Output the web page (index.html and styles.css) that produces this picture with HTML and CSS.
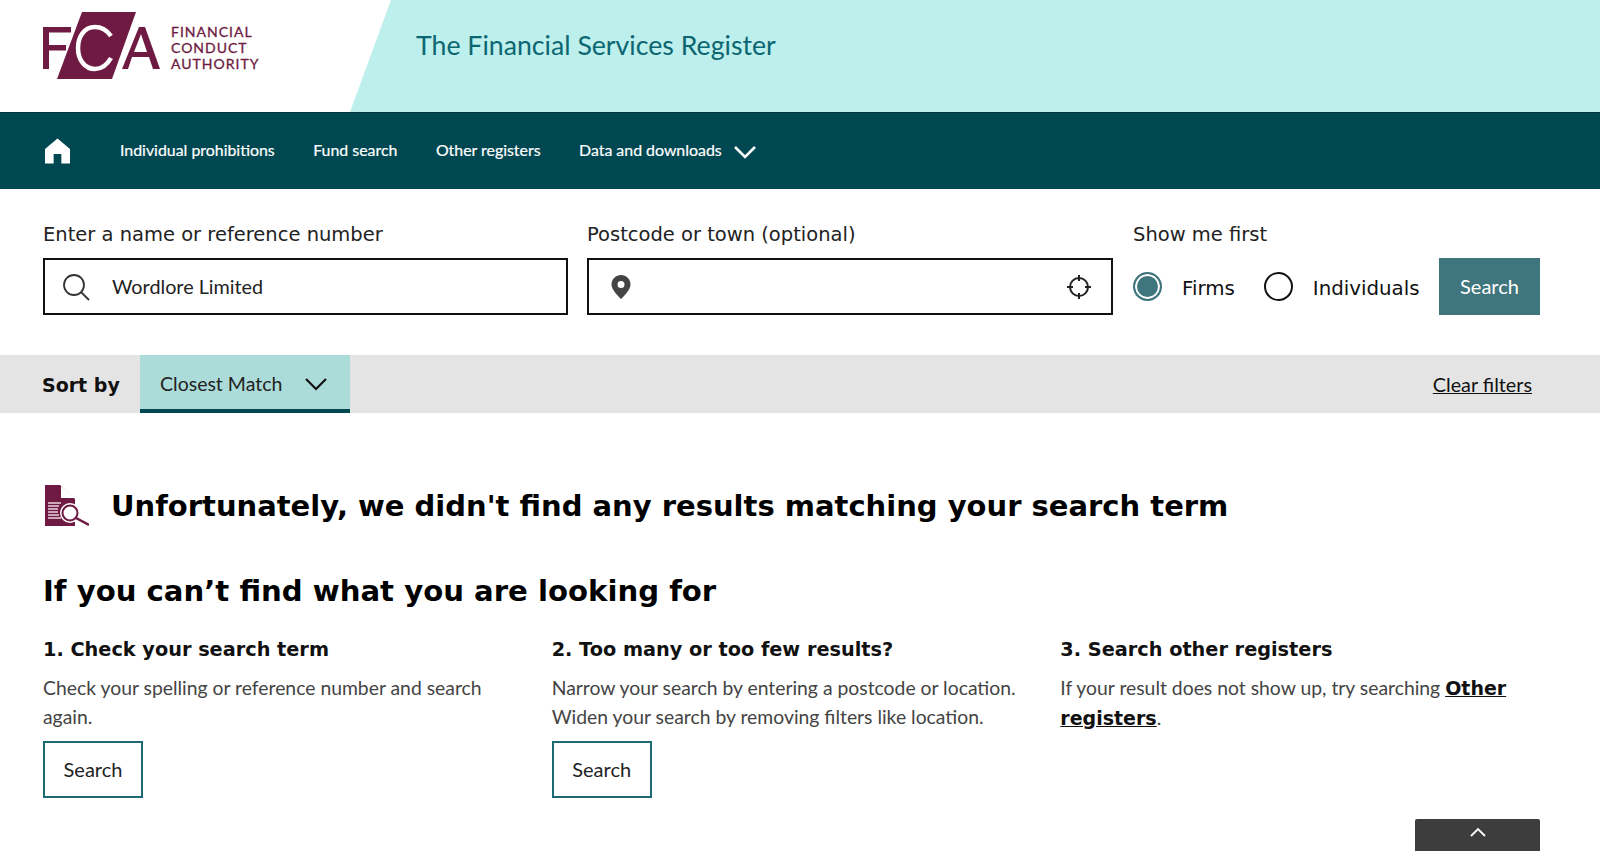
FILE: index.html
```html
<!DOCTYPE html>
<html lang="en">
<head>
    <meta charset="UTF-8">
    <meta name="viewport" content="width=device-width, initial-scale=1.0">
    <title>The Financial Services Register</title>
    <link rel="stylesheet" href="styles.css">
</head>
<body>

<header class="site-header">
    <div class="logo-box">
        <svg class="logo-mark" width="122" height="68" viewBox="0 0 122 68">
            <polygon points="40,0 94,0 70,67 15,67" fill="#6e1a42"/>
            <path d="M1 15H29V20.500H7V33H24V38.500H7V57H1Z" fill="#6e1a42"/>
            <path d="M69 24C64 17 58 15 53 15C42 15 36 25 36 36C36 48 43 57 53 57C59 57 65 53 69 46" fill="none" stroke="#fff" stroke-width="4.500"/>
            <path d="M80 57L97 15H103L118 57H111L107 45H90L86 57ZM92 40H105L99 22Z" fill="#6e1a42"/>
        </svg>
        <div class="logo-text">
            <span>FINANCIAL</span>
            <span>CONDUCT</span>
            <span>AUTHORITY</span>
        </div>
    </div>
    <div class="title-band">
        <h1>The Financial Services Register</h1>
    </div>
</header>

<nav class="main-nav">
    <a class="home-link" href="#">
        <svg width="25" height="28" viewBox="0 0 26 28">
            <path d="M13 1L26 12V27H17V17H9V27H0V12Z" fill="#fff"/>
        </svg>
    </a>
    <a href="#">Individual prohibitions</a>
    <a href="#">Fund search</a>
    <a href="#">Other registers</a>
    <a class="nav-dropdown" href="#">Data and downloads
        <svg width="24" height="15" viewBox="0 0 24 15">
            <path d="M2 2L12 12L22 2" fill="none" stroke="#fff" stroke-width="2.600"/>
        </svg>
    </a>
</nav>

<form class="search-form">
    <div class="form-group name-group">
        <label for="name">Enter a name or reference number</label>
        <div class="input-box">
            <svg class="search-icon" width="28" height="28" viewBox="0 0 28 28">
                <circle cx="12" cy="12" r="10" fill="none" stroke="#333" stroke-width="1.800"/>
                <path d="M19 19L27 27" stroke="#333" stroke-width="1.800"/>
            </svg>
            <input type="text" id="name" value="Wordlore Limited">
        </div>
    </div>
    <div class="form-group town-group">
        <label for="town">Postcode or town (optional)</label>
        <div class="input-box">
            <svg class="pin-icon" width="20" height="24" viewBox="0 0 20 24">
                <path fill-rule="evenodd" d="M10 0C15 0 19.500 4 19.500 9.500C19.500 14 15 19 10 24C5 19 .5 14 .5 9.500C.5 4 5 0 10 0ZM10 6A3.500 3.500 0 1 0 10 13A3.500 3.500 0 1 0 10 6Z" fill="#444"/>
            </svg>
            <input type="text" id="town">
            <svg class="locate-icon" width="26" height="26" viewBox="0 0 26 26">
                <circle cx="13" cy="13" r="9" fill="none" stroke="#222" stroke-width="2"/>
                <path d="M13 1V7M13 19V25M1 13H7M19 13H25" stroke="#222" stroke-width="2"/>
            </svg>
        </div>
    </div>
    <div class="form-group show-group">
        <span class="group-label">Show me first</span>
        <div class="radio-row">
            <span class="radio checked"></span>
            <span class="radio-text firms-text">Firms</span>
            <span class="radio"></span>
            <span class="radio-text">Individuals</span>
            <button type="button" class="search-button">Search</button>
        </div>
    </div>
</form>

<div class="sort-bar">
    <span class="sort-label">Sort by</span>
    <div class="sort-select">
        Closest Match
        <svg width="24" height="14" viewBox="0 0 24 14">
            <path d="M2 2L12 12L22 2" fill="none" stroke="#111" stroke-width="2.200"/>
        </svg>
    </div>
    <a class="clear-filters" href="#">Clear filters</a>
</div>

<main class="results">
    <div class="no-results">
        <svg width="44" height="42" viewBox="0 0 44 42">
            <path d="M0 0H15L30 14V41H0Z" fill="#6e1a42"/>
            <path d="M16 1L30 13H16Z" fill="#fff"/>
            <path d="M3 18H16M3 21H14M3 24H13M3 27H13M3 30H14M3 33H16" stroke="#e9d5df" stroke-width="1.300"/>
            <circle cx="25" cy="28" r="10" fill="#fff"/>
            <circle cx="25" cy="28" r="7.500" fill="#fff" stroke="#6e1a42" stroke-width="2"/>
            <path d="M31 33L44 40" stroke="#6e1a42" stroke-width="2.500"/>
        </svg>
        <h2>Unfortunately, we didn't find any results matching your search term</h2>
    </div>

    <h3 class="help-title">If you can’t find what you are looking for</h3>

    <div class="help-columns">
        <section class="help-col">
            <h4>1. Check your search term</h4>
            <p>Check your spelling or reference number and search again.</p>
            <a class="outline-button" href="#">Search</a>
        </section>
        <section class="help-col">
            <h4>2. Too many or too few results?</h4>
            <p>Narrow your search by entering a postcode or location. Widen your search by removing filters like location.</p>
            <a class="outline-button" href="#">Search</a>
        </section>
        <section class="help-col">
            <h4>3. Search other registers</h4>
            <p>If your result does not show up, try searching <a href="#">Other registers</a>.</p>
        </section>
    </div>
</main>

<a class="back-to-top" href="#">
    <svg width="18" height="11" viewBox="0 0 18 11">
        <path d="M2 9L9 2L16 9" fill="none" stroke="#fff" stroke-width="1.800"/>
    </svg>
</a>

</body>
</html>
```

FILE: styles.css
```css
body {
    font-family: Lato, sans-serif;
    background-color: #fff;
    color: #111;
    margin: 0;
    overflow: hidden;
}

a {
    color: inherit;
}

/* Header */
.site-header {
    display: flex;
    height: 112px;
}

.logo-box {
    display: flex;
    align-items: flex-start;
    width: 350px;
    flex-shrink: 0;
    padding: 12px 0 0 42px;
    box-sizing: border-box;
}

.logo-text {
    display: flex;
    flex-direction: column;
    margin: 12px 0 0 7px;
    font-size: 14px;
    line-height: 16px;
    letter-spacing: 1px;
    color: #6e1a42;
    -webkit-text-stroke: 0.3px #6e1a42;
}

.title-band {
    flex: 1;
    background-color: #bdf0ec;
    clip-path: polygon(41px 0, 100% 0, 100% 100%, 0 100%);
    padding-left: 66px;
}

.title-band h1 {
    margin: 27px 0 0;
    font-size: 26.700px;
    font-weight: 400;
    line-height: 36px;
    color: #0c6672;
}

/* Navigation */
.main-nav {
    display: flex;
    align-items: center;
    height: 77px;
    padding-left: 45px;
    box-sizing: border-box;
    background-color: #004851;
    border-top: 1px solid #00333c;
    color: #fff;
    font-size: 15.900px;
    -webkit-text-stroke: 0.2px #fff;
}

.main-nav a {
    margin-right: 38.500px;
    padding-bottom: 3px;
    text-decoration: none;
}

.main-nav .home-link {
    display: flex;
    margin-right: 50px;
    padding-bottom: 1px;
}

.nav-dropdown {
    display: flex;
    align-items: center;
    gap: 11px;
}

.nav-dropdown svg {
    margin-top: 5px;
}

/* Search form */
.search-form {
    display: flex;
    height: 166px;
    padding: 33px 60px 0 43px;
    box-sizing: border-box;
}

.form-group label,
.group-label {
    display: block;
    height: 36px;
    font-family: "DejaVu Sans", sans-serif;
    font-size: 19.500px;
    line-height: 26px;
    color: #222;
}

.name-group {
    width: 525px;
    margin-right: 19px;
}

.town-group {
    width: 526px;
    margin-right: 20px;
}

.show-group {
    flex: 1;
}

.input-box {
    display: flex;
    align-items: center;
    height: 57px;
    border: 2px solid #111;
    box-sizing: border-box;
}

.input-box input {
    flex: 1;
    min-width: 0;
    border: none;
    outline: none;
    padding: 0 0 2px;
    font-family: Lato, sans-serif;
    font-size: 19.800px;
    color: #222;
}

.search-icon {
    margin: 0 22px 0 17px;
}

.pin-icon {
    margin: 0 24px 0 22px;
}

.locate-icon {
    margin-right: 19px;
}

.radio-row {
    display: flex;
    align-items: center;
    height: 57px;
}

.radio {
    width: 29px;
    height: 29px;
    border: 2px solid #111;
    border-radius: 50%;
    box-sizing: border-box;
    flex-shrink: 0;
}

.radio.checked {
    border-color: #3f757c;
    background-color: #3f757c;
    box-shadow: inset 0 0 0 2px #fff;
}

.radio-text {
    margin-left: 20px;
    padding-top: 4px;
    font-family: "DejaVu Sans", sans-serif;
    font-size: 19.800px;
    color: #111;
}

.firms-text {
    margin-right: 29px;
}

.search-button {
    margin-left: auto;
    width: 101px;
    height: 57px;
    padding: 0 0 2px;
    flex-shrink: 0;
    border: none;
    background-color: #3f757c;
    color: #fff;
    font-family: Lato, sans-serif;
    font-size: 20px;
}

/* Sort bar */
.sort-bar {
    display: flex;
    align-items: stretch;
    height: 58px;
    padding: 0 68px 0 42px;
    background-color: #e4e4e4;
}

.sort-label {
    align-self: center;
    width: 98px;
    margin-top: 2px;
    font-family: "DejaVu Sans", sans-serif;
    font-size: 19px;
    font-weight: 700;
}

.sort-select {
    display: flex;
    align-items: center;
    justify-content: space-between;
    width: 210px;
    padding: 3px 22px 0 20px;
    box-sizing: border-box;
    background-color: #abdcd9;
    border-bottom: 4px solid #004851;
    font-size: 19.500px;
    color: #222;
}

.clear-filters {
    align-self: center;
    margin-left: auto;
    font-size: 19.800px;
}

/* Results */
.results {
    padding: 71px 60px 0 43px;
}

.no-results {
    display: flex;
    align-items: center;
    gap: 22px;
    height: 44px;
    padding-left: 2px;
}

.no-results h2 {
    margin: 0;
    font-family: "DejaVu Sans", sans-serif;
    font-size: 29px;
    font-weight: 700;
    color: #000;
}

.help-title {
    margin: 45px 0 0;
    font-family: "DejaVu Sans", sans-serif;
    font-size: 29.150px;
    font-weight: 700;
    line-height: 36px;
    color: #000;
}

.help-columns {
    display: grid;
    grid-template-columns: repeat(3, 1fr);
    column-gap: 29px;
    margin-top: 28px;
}

.help-col h4 {
    margin: 0;
    font-family: "DejaVu Sans", sans-serif;
    font-size: 19.300px;
    font-weight: 700;
    line-height: 26px;
    color: #111;
}

.help-col p {
    margin: 10px 0 10px;
    font-size: 19.350px;
    line-height: 29px;
    color: #444;
}

.help-col p a {
    font-family: "DejaVu Sans", sans-serif;
    font-size: 19px;
    font-weight: 700;
    color: #111;
}

.outline-button {
    display: flex;
    align-items: center;
    justify-content: center;
    width: 100px;
    height: 57px;
    padding-bottom: 2px;
    border: 2px solid #1d6a72;
    box-sizing: border-box;
    font-size: 20px;
    text-decoration: none;
    color: #222;
}

.back-to-top {
    position: fixed;
    right: 60px;
    bottom: 0;
    display: flex;
    justify-content: center;
    padding-top: 8px;
    width: 125px;
    height: 32px;
    box-sizing: border-box;
    background-color: #3d3d3d;
    border-radius: 2px 2px 0 0;
}
```
